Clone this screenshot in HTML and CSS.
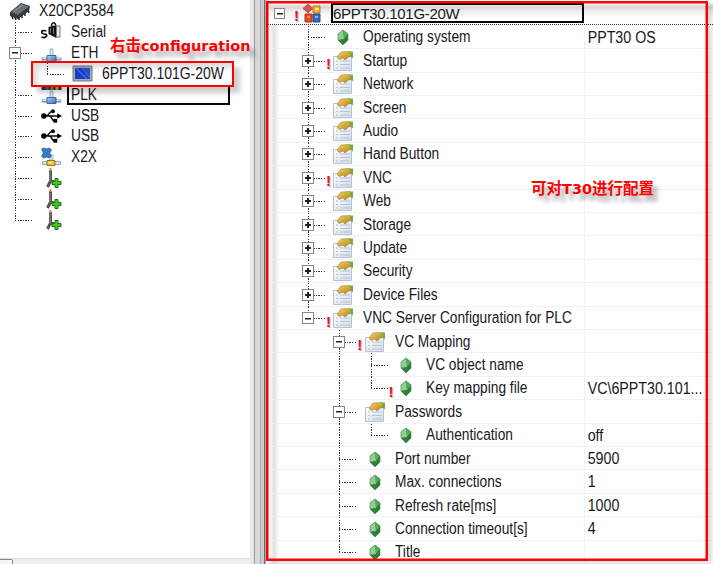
FILE: index.html
```html
<!DOCTYPE html>
<html lang="zh">
<head>
<meta charset="utf-8">
<title>6PPT30.101G-20W</title>
<link rel="stylesheet" href="styles.css">
</head>
<body>
<svg class="defs" width="0" height="0">
  <defs>
    <linearGradient id="blue" x2="1" y2="1"><stop offset="0" stop-color="#b5d7f5"/><stop offset="1" stop-color="#3168ac"/></linearGradient>
    <linearGradient id="gold" x2="1" y2="1"><stop offset="0" stop-color="#f8da60"/><stop offset="1" stop-color="#ad7c16"/></linearGradient>
    <linearGradient id="sheet" x2="1" y2="1"><stop offset="0" stop-color="#fff"/><stop offset="1" stop-color="#d3dbe8"/></linearGradient>
    <symbol id="gem" viewBox="0 0 20 20">
      <path d="M10 3 15 7v6l-5 5-5-5V7z" fill="#3c9145"/><path d="m10 3 1 9-6 1V7z" fill="#92cf92"/><path d="m10 3 5 4-4 5z" fill="#57ac5b"/><path d="m5 13 6-1-1 6z" fill="#348040"/><path d="m11 12 4-5v6l-5 5z" fill="#2c7d38"/>
      <path d="M10 3 15 7v6l-5 5-5-5V7z" fill="none" stroke="#4b8f50" stroke-width=".7"/>
    </symbol>
    <symbol id="props" viewBox="0 0 20 20">
      <path d="M.5 5.500h18v14H.5z" fill="url(#sheet)" stroke="#b7c2d4"/>
      <path d="M3 10h2M3 13.500h2M3 17h2M7 10h10M7 13.500h10M7 17h10" stroke="#b5c1d4" stroke-width="1.200"/>
      <path d="M17 .5h3v7l-4-3z" fill="#4fc63f"/><path d="m4 6 4-5 9-.5 1.500 4.500-3 1-3.500 3-2-2-4 1.500z" fill="url(#gold)" stroke="#9b8240" stroke-width=".6"/>
    </symbol>
    <symbol id="root" viewBox="0 0 20 20">
      <path d="m6 0 5 4.500L6 9 1 4.500z" fill="#d4545b" stroke="#a63b42" stroke-width=".7"/>
      <path d="M11 2h7v7h-7z" fill="#f3b02d" stroke="#c46b17"/><path d="M3 10h7v8H3z" fill="#e84c20" stroke="#b43012"/><path d="M11 10h7v8h-7z" fill="#3769bd" stroke="#204c92"/><path d="M13 4h4v2h-4z" fill="#ffe58a"/><path d="M5 12h3v2H5z" fill="#ff8e62"/><path d="M13 12h3v2h-3z" fill="#91b7ec"/>
    </symbol>
    <symbol id="chip" viewBox="0 0 22 20">
      <path d="M1 11 12 2l9 3-1 5L9 18l-8-3z" fill="#333b42"/><path d="m2 11 10-8 8 2.500L9 14z" fill="#66717a"/><path d="m3 15 1 3m2-2 1 3m3-3v3m3-5v3m3-5v3m3-6 1 3" stroke="#20262a" stroke-width="1.500"/><path d="m5 10 9-6" stroke="#929da5"/>
    </symbol>
    <symbol id="serial" viewBox="0 0 20 20">
      <path d="M7 5 15 3v13L7 12z" fill="#111"/><path d="M15 4h3.500v11H15z" fill="#eee" stroke="#777"/><path d="M9 6v5m3-5v6" stroke="#777"/><path d="M10 4C10 0 14 0 14 3" fill="none" stroke="#111" stroke-width="1.500"/><path d="M5 9C-1 7-1 12 3 12s2 5-3 3" fill="none" stroke="#111" stroke-width="1.700"/>
    </symbol>
    <symbol id="net" viewBox="0 0 20 20">
      <path d="M0 16h20" stroke="#7890a5" stroke-width="3"/><path d="M1 15.500h18" stroke="#d8e6ee"/><path d="M8.500 6h3v7h-3z" fill="#d9e5f2" stroke="#8499b2" stroke-width=".7"/><path d="M5.500 12.500h9v6h-9z" fill="url(#blue)" stroke="#36699d"/>
    </symbol>
    <symbol id="plk" viewBox="0 0 20 20">
      <path d="M0 1h20v4H0z" fill="#333"/><path d="M4 1h3v4H4z" fill="#27708c"/><path d="M9 1h3v4H9z" fill="#68994c"/><path d="M14 1h3v4h-3z" fill="#d1a22c"/><use href="#net" width="20" height="20"/>
    </symbol>
    <symbol id="usb" viewBox="0 0 22 20">
      <path d="M3 10h16M5 10c4 0 3-5 7-5m-4 5c4 0 3 5 6 5" fill="none" stroke="#080808" stroke-width="1.600"/><circle cx="3" cy="10" r="2.900"/><path d="m17 7 5 3-5 3z"/><circle cx="12.500" cy="5" r="2"/><path d="M13 13h4v4h-4z"/>
    </symbol>
    <symbol id="x2x" viewBox="0 0 20 20">
      <path d="M8.500 8h3v5h-3z" fill="#d7e3ee" stroke="#9aabc0" stroke-width=".7"/><path d="m0 2 3-1 2 1 3-1 2 2-2 3 2 3-2 2-3-1-3 1-2-2 2-3z" fill="#3d79c2" stroke="#2960a5" stroke-width=".8"/><path d="M1 14.500h18v3H1z" fill="#d8e2ef" stroke="#8298b2" stroke-width=".8"/><path d="M5.500 13.500h8v5h-8z" fill="#f5bb29" stroke="#9b741b"/><path d="M7 14.500h4v2H7z" fill="#ffe996"/>
    </symbol>
    <symbol id="slot" viewBox="0 0 20 20">
      <path d="M9 2v11l-3 6m3-6 4 1" fill="none" stroke="#555550" stroke-width="3"/><path d="M8 0h2v3H8z" fill="#dd8b63"/><path d="M8.500 4v10" stroke="#8a8a83"/><path d="M13.500 10.500h3v3h3v3h-3v3h-3v-3h-3v-3h3z" fill="#48c523" stroke="#187412"/>
    </symbol>
    <symbol id="screen" viewBox="0 0 21 17">
      <path d="M1 1h19v15H1z" fill="#a8abb0" stroke="#74777d"/><path d="M3 3h15v11H3z" fill="#173ec3"/><path d="m4 3 11 11m-5-11 8 10" stroke="#4a6ee0" stroke-width="1.200"/><path d="m10 3 8 9V3z" fill="#2450d5"/>
    </symbol>
  </defs>
</svg>
<main class="window">
  <section class="hardware">
    <div class="hw top"><svg class="chip"><use href="#chip"/></svg><span>X20CP3584</span></div>
    <div class="hw"><i class="branch"></i><svg><use href="#serial"/></svg><span>Serial</span></div>
    <div class="hw"><i class="branch"><b class="box"></b></i><svg><use href="#net"/></svg><span>ETH</span></div>
    <div class="hw device"><i class="line"></i><i class="branch end"></i><svg><use href="#screen"/></svg><span>6PPT30.101G-20W</span></div>
    <div class="hw"><i class="branch"></i><svg><use href="#plk"/></svg><div class="plk"><span>PLK</span></div></div>
    <div class="hw"><i class="branch"></i><svg><use href="#usb"/></svg><span>USB</span></div>
    <div class="hw"><i class="branch"></i><svg><use href="#usb"/></svg><span>USB</span></div>
    <div class="hw"><i class="branch"></i><svg><use href="#x2x"/></svg><span>X2X</span></div>
    <div class="hw"><i class="branch"></i><svg><use href="#slot"/></svg></div>
    <div class="hw"><i class="branch"></i><svg><use href="#slot"/></svg></div>
    <div class="hw"><i class="branch end"></i><svg><use href="#slot"/></svg></div>
    <div class="hscroll"><div class="thumb"></div></div>
    <div class="mark device-mark"></div>
    <div class="note note-left">右击<span class="latin">configuration</span></div>
  </section>
  <div class="splitter"></div>
  <section class="config">
    <div class="head"><div class="head-tree"><b class="box"></b><em>!</em><svg><use href="#root"/></svg></div><div class="title">6PPT30.101G-20W</div></div>
    <div class="row"><div class="name"><i class="branch"></i><svg><use href="#gem"/></svg><span>Operating system</span></div><div class="value">PPT30 OS</div></div>
    <div class="row"><div class="name"><i class="branch"><b class="box plus"></b><em>!</em></i><svg><use href="#props"/></svg><span>Startup</span></div><div class="value"></div></div>
    <div class="row"><div class="name"><i class="branch"><b class="box plus"></b></i><svg><use href="#props"/></svg><span>Network</span></div><div class="value"></div></div>
    <div class="row"><div class="name"><i class="branch"><b class="box plus"></b></i><svg><use href="#props"/></svg><span>Screen</span></div><div class="value"></div></div>
    <div class="row"><div class="name"><i class="branch"><b class="box plus"></b></i><svg><use href="#props"/></svg><span>Audio</span></div><div class="value"></div></div>
    <div class="row"><div class="name"><i class="branch"><b class="box plus"></b></i><svg><use href="#props"/></svg><span>Hand Button</span></div><div class="value"></div></div>
    <div class="row"><div class="name"><i class="branch"><b class="box plus"></b><em>!</em></i><svg><use href="#props"/></svg><span>VNC</span></div><div class="value"></div></div>
    <div class="row"><div class="name"><i class="branch"><b class="box plus"></b></i><svg><use href="#props"/></svg><span>Web</span></div><div class="value"></div></div>
    <div class="row"><div class="name"><i class="branch"><b class="box plus"></b></i><svg><use href="#props"/></svg><span>Storage</span></div><div class="value"></div></div>
    <div class="row"><div class="name"><i class="branch"><b class="box plus"></b></i><svg><use href="#props"/></svg><span>Update</span></div><div class="value"></div></div>
    <div class="row"><div class="name"><i class="branch"><b class="box plus"></b></i><svg><use href="#props"/></svg><span>Security</span></div><div class="value"></div></div>
    <div class="row"><div class="name"><i class="branch"><b class="box plus"></b></i><svg><use href="#props"/></svg><span>Device Files</span></div><div class="value"></div></div>
    <div class="row"><div class="name"><i class="branch end"><b class="box"></b><em>!</em></i><svg><use href="#props"/></svg><span>VNC Server Configuration for PLC</span></div><div class="value"></div></div>
    <div class="row"><div class="name"><i class="gap"></i><i class="branch"><b class="box"></b><em>!</em></i><svg><use href="#props"/></svg><span>VC Mapping</span></div><div class="value"></div></div>
    <div class="row"><div class="name"><i class="gap"></i><i class="line"></i><i class="branch"></i><svg><use href="#gem"/></svg><span>VC object name</span></div><div class="value"></div></div>
    <div class="row"><div class="name"><i class="gap"></i><i class="line"></i><i class="branch end"><em>!</em></i><svg><use href="#gem"/></svg><span>Key mapping file</span></div><div class="value">VC\6PPT30.101...</div></div>
    <div class="row"><div class="name"><i class="gap"></i><i class="branch"><b class="box"></b></i><svg><use href="#props"/></svg><span>Passwords</span></div><div class="value"></div></div>
    <div class="row"><div class="name"><i class="gap"></i><i class="line"></i><i class="branch end"></i><svg><use href="#gem"/></svg><span>Authentication</span></div><div class="value">off</div></div>
    <div class="row"><div class="name"><i class="gap"></i><i class="branch"></i><svg><use href="#gem"/></svg><span>Port number</span></div><div class="value">5900</div></div>
    <div class="row"><div class="name"><i class="gap"></i><i class="branch"></i><svg><use href="#gem"/></svg><span>Max. connections</span></div><div class="value">1</div></div>
    <div class="row"><div class="name"><i class="gap"></i><i class="branch"></i><svg><use href="#gem"/></svg><span>Refresh rate[ms]</span></div><div class="value">1000</div></div>
    <div class="row"><div class="name"><i class="gap"></i><i class="branch"></i><svg><use href="#gem"/></svg><span>Connection timeout[s]</span></div><div class="value">4</div></div>
    <div class="row"><div class="name"><i class="gap"></i><i class="branch end"></i><svg><use href="#gem"/></svg><span>Title</span></div><div class="value"></div></div>
    <div class="mark config-mark"></div>
    <div class="note note-right">可对<span class="latin">T30</span>进行配置</div>
  </section>
</main>
</body>
</html>
```
FILE: styles.css
```css
* { box-sizing: border-box; }
body { margin: 0; overflow: hidden; font: 16px/20px "Liberation Sans", sans-serif; color: #18181c; }
.defs { position: absolute; }
.window { display: flex; width: 713px; height: 564px; background: #fff; overflow: hidden; }
svg { flex: none; overflow: visible; }
i { flex: none; display: block; position: relative; height: 100%; }
span, .value, .title { white-space: nowrap; }
.name span, .hw span, .value { transform: scaleX(.857); transform-origin: left center; }
.hw span { display: block; }

.line::before, .branch::before { content: ""; position: absolute; left: var(--x); top: 0; bottom: 0; width: 1px; background: repeating-linear-gradient(#333 0 1.4px, transparent 1.4px 2.6px); }
.branch.end::before { bottom: 50%; }
.branch::after { content: ""; position: absolute; left: var(--x); top: 50%; width: 17px; height: 1px; background: repeating-linear-gradient(90deg, #333 0 1.4px, transparent 1.4px 2.6px); }
.box { display: block; position: relative; z-index: 1; width: 12px; height: 12px; border: 1px solid #858585; background: linear-gradient(#222, #222) center / 6px 1.5px no-repeat, #fff; }
.box.plus { background: linear-gradient(#222, #222) center / 6px 2px no-repeat, linear-gradient(#222, #222) center / 2px 6px no-repeat, #fff; }
.branch .box { position: absolute; left: calc(var(--x) - 6px); top: calc(50% - 6px); }
em { font: bold 15px/16px "Liberation Sans", sans-serif; color: #e8102f; text-shadow: 1px 1px 1px #aaa; }

.hardware { position: relative; width: 250px; display: flex; flex-direction: column; }
.hw { --x: 15px; display: flex; align-items: center; height: 20.9px; flex: none; }
.hw.top { height: 21.5px; padding-left: 9px; }
.hw .branch, .hw .line { width: 41px; }
.hw svg { width: 21px; height: 20px; }
.hw svg.chip { width: 22px; }
.hw span { margin-left: 9px; }
.hw.top span { margin-left: 8px; transform: scaleX(.87); }
.device .branch { --x: 6px; width: 31px; }
.device svg { height: 17px; }
.hw.device span { transform: scaleX(.874); }
.hw .plk { height: 20px; width: 163px; margin-left: 5px; padding-left: 2px; border: 2px solid #080808; line-height: 17px; }
.hw .plk span { margin: -1px 0 0; }
.hscroll { height: 6px; margin-top: auto; border-top: 1px solid #ddd; background: #eee; }
.thumb { width: 13px; height: 6px; border: 1px solid #888; border-left: 0; border-radius: 0 2px 0 0; background: #f5f5f5; }

.splitter { width: 16px; flex: none; background: linear-gradient(90deg, #e8e8e8 0 3px, #ddd 4px, #999 4px 5px, #d8d8d8 5px 10px, #aaa 10px 11px, #ccc 11px 14px, #686868 14px 15px, #aaa 15px); }
.config { position: relative; width: 447px; background: linear-gradient(90deg, #fff 2px, #f3f3f3 5px, #e1e1e1 8px, #fff 13px); }
.head { display: flex; height: 25px; margin-bottom: .7px; padding-top: 3px; background: linear-gradient(#fff 3px, #d5d5d5 7px, #ededed 11px, #fff 18px); border-bottom: 1px dotted #333; }
.head-tree { width: 65px; padding-left: 8px; display: flex; align-items: center; }
.head-tree .box { width: 11px; height: 11px; }
.head-tree em { margin: 5px 0 0 9px; width: 7px; }
.head-tree svg { width: 20px; height: 20px; margin-left: 1px; }
.title { width: 253px; height: 20px; border: 2px solid #050505; font-size: 15px; line-height: 18px; letter-spacing: -.3px; }
.row { display: flex; height: 23.42px; border-bottom: 1px solid #edf2f7; }
.name { --x: 15px; flex: none; width: 319px; height: 23.42px; padding-left: 27px; display: flex; align-items: center; border-right: 1px solid #edf2f7; }
.name i { width: 31.3px; }
.name svg { width: 20px; height: 20px; margin: 0 10px 0 9px; }
.branch em { position: absolute; left: 33px; top: 7px; }
.value { flex: none; padding-left: 3px; line-height: 24px; transform: scaleX(.89); }

.mark { position: absolute; border: 2px solid #f00; pointer-events: none; }
.device-mark { left: 31px; top: 61px; width: 203px; height: 26px; box-shadow: 6px 6px 5px #0003, inset 5px 5px 5px #0002; }
.config-mark { left: 0; top: 1px; width: 442px; height: 560px; box-shadow: inset 0 0 0 .5px #f00, 4px 2px 4px #0002; }
.note { position: absolute; z-index: 2; color: #f00; font-family: "Noto Sans CJK SC", sans-serif; font-weight: bold; white-space: nowrap; text-shadow: 5px 6px 4px #0005; }
.note-left { left: 110px; top: 34px; font-size: 15.5px; }
.latin { font: bold 14.5px "DejaVu Sans", sans-serif; }
.note-right { left: 265px; top: 177px; font-size: 15.5px; }
```
